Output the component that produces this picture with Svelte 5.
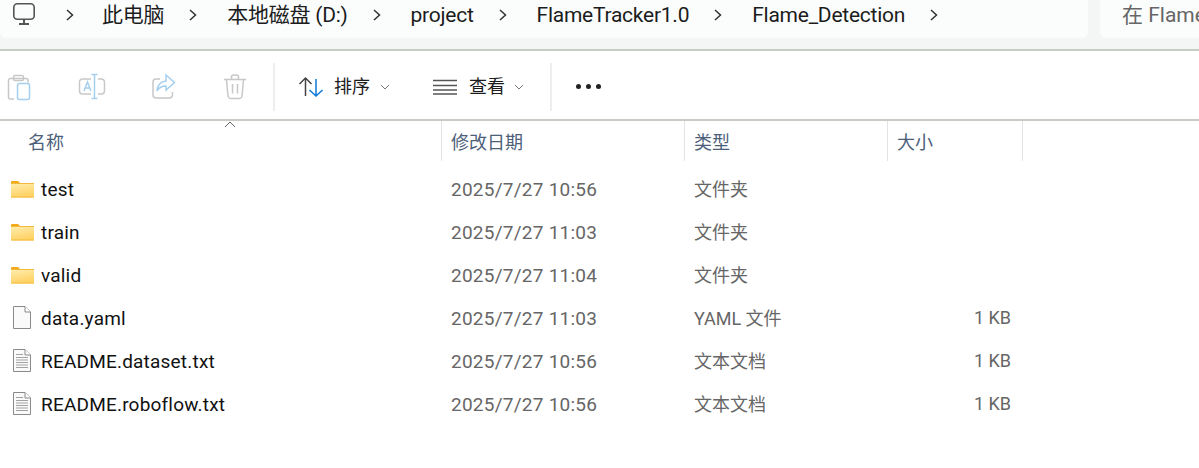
<script lang="ts">
	const crumbs = ['此电脑', '本地磁盘 (D:)', 'project', 'FlameTracker1.0', 'Flame_Detection'];

	const columns = ['修改日期', '类型', '大小'];

	const files = [
		{ name: 'test', kind: 'folder', date: '2025/7/27 10:56', type: '文件夹', size: '' },
		{ name: 'train', kind: 'folder', date: '2025/7/27 11:03', type: '文件夹', size: '' },
		{ name: 'valid', kind: 'folder', date: '2025/7/27 11:04', type: '文件夹', size: '' },
		{ name: 'data.yaml', kind: 'blank', date: '2025/7/27 11:03', type: 'YAML 文件', size: '1 KB' },
		{ name: 'README.dataset.txt', kind: 'text', date: '2025/7/27 10:56', type: '文本文档', size: '1 KB' },
		{ name: 'README.roboflow.txt', kind: 'text', date: '2025/7/27 10:56', type: '文本文档', size: '1 KB' }
	];
</script>

<div class="page">
	<!-- Address bar -->
	<div class="top">
		<div class="address">
			<svg class="pc" width="24" height="24" viewBox="0 0 24 24" fill="none" stroke="#555" stroke-width="1.6">
				<rect x="1.800" y="1.800" width="20.400" height="15.400" rx="3.500" />
				<path d="M12 17.500v4M7 22h10" stroke-width="2" />
			</svg>
			<svg class="chev first" width="10" height="14" viewBox="0 0 10 14" fill="none" stroke="#333" stroke-width="1.5"><path d="M2 2l5.500 5-5.500 5" /></svg>
			{#each crumbs as crumb}
				<span class="crumb">{crumb}</span>
				<svg class="chev" width="10" height="14" viewBox="0 0 10 14" fill="none" stroke="#333" stroke-width="1.5"><path d="M2 2l5.500 5-5.500 5" /></svg>
			{/each}
		</div>
		<div class="search">在 Flame</div>
	</div>

	<!-- Toolbar -->
	<div class="toolbar">
		<div class="tool-group">
			<svg class="tool" width="28" height="28" viewBox="0 0 28 28" fill="none" stroke-width="1.5">
				<path d="M8 26H4.500a2 2 0 0 1-2-2V7.500a2 2 0 0 1 2-2H20a2 2 0 0 1 2 2v2" stroke="#c8c8c8" />
				<rect x="7.500" y="2.500" width="10" height="5" rx="1.500" stroke="#c8c8c8" />
				<rect x="11.500" y="10.500" width="12" height="16" rx="2" stroke="#a5cfee" />
			</svg>
			<svg class="tool" width="28" height="28" viewBox="0 0 28 28" fill="none" stroke-width="1.500">
				<path d="M13 6H4.500a3 3 0 0 0-3 3v9a3 3 0 0 0 3 3H13M20 6h3.500a3 3 0 0 1 3 3v9a3 3 0 0 1-3 3H20" stroke="#c8c8c8" />
				<path d="M16.500 2v23M13.500 1.500h6M13.500 25.500h6M6 18l3.500-9 3.500 9M7.200 15h4.600" stroke="#a5cfee" />
			</svg>
			<svg class="tool" width="28" height="28" viewBox="0 0 28 28" fill="none" stroke-width="1.500">
				<path d="M22.500 19v3a3 3 0 0 1-3 3H6a3 3 0 0 1-3-3V9a3 3 0 0 1 3-3h4" stroke="#c8c8c8" />
				<path d="M16 2l8.500 7.500L16 17v-4c-4 0-7 1.500-9 5 .5-6 4-9.500 9-10z" stroke="#a5cfee" />
			</svg>
			<svg class="tool" width="28" height="28" viewBox="0 0 28 28" fill="none" stroke="#c8c8c8" stroke-width="1.500">
				<path d="M2 6.500h22M9.500 6V4a2 2 0 0 1 2-2h3a2 2 0 0 1 2 2v2M4.500 7l1.500 16a3 3 0 0 0 3 2.500h8a3 3 0 0 0 3-2.500L21.500 7M10.500 11v9.500M15.500 11v9.500" />
			</svg>
		</div>
		<div class="sep"></div>
		<div class="action sort">
			<svg width="26" height="22" viewBox="0 0 26 22" fill="none" stroke-width="1.500">
				<path d="M7.500 20V2M1.500 8l6-6 6 6" stroke="#444" />
				<path d="M18 3v17M11.500 14l6.500 6 6.500-6" stroke="#0f7ad8" />
			</svg>
			<span>排序</span>
			<svg class="caret" width="10" height="6" viewBox="0 0 10 6" fill="none" stroke="#777"><path d="M1 1l4 4 4-4" /></svg>
		</div>
		<div class="action view">
			<svg width="24" height="16" viewBox="0 0 24 16" fill="none" stroke="#555" stroke-width="1.500">
				<path d="M0 1.500h24M0 6.500h24M0 11h24M0 15h24" />
			</svg>
			<span>查看</span>
			<svg class="caret" width="10" height="6" viewBox="0 0 10 6" fill="none" stroke="#777"><path d="M1 1l4 4 4-4" /></svg>
		</div>
		<div class="sep"></div>
		<div class="more"><i></i><i></i><i></i></div>
	</div>

	<!-- File list -->
	<div class="list">
		<div class="row head">
			<div class="col name-head">
				名称
				<svg class="sort-arrow" width="12" height="7" viewBox="0 0 12 7" fill="none" stroke="#666"><path d="M1 6l5-5 5 5" /></svg>
			</div>
			{#each columns as col}
				<div class="col divided">{col}</div>
			{/each}
			<div class="end"></div>
		</div>

		{#each files as file}
			<div class="row item">
				<div class="col name">
					{#if file.kind === 'folder'}
						<svg class="icon" width="23" height="18" viewBox="0 0 23 18">
							<defs>
								<linearGradient id="folder-fill" x1="0" y1="0" x2="0.3" y2="1">
									<stop offset="0" stop-color="#ffeeb0" />
									<stop offset="1" stop-color="#ffd265" />
								</linearGradient>
							</defs>
							<path d="M0 2a1 1 0 0 1 1-1h6l2.500 2.500H0z" fill="#f2a918" />
							<rect x="0" y="3" width="23" height="14.500" rx="1" fill="url(#folder-fill)" />
							<path d="M0 3h23v1H0zM0 16.500h23v1H0z" fill="#f3b93c" />
						</svg>
					{:else}
						<svg class="icon file" width="18" height="23" viewBox="0 0 18 23" fill="#fafafa" stroke="#8a8a8a">
							<path d="M.5.500h11.500l5.500 5.500v16.500H.5z" />
							<path d="M12 .500V6h5.500" fill="#fff" />
							{#if file.kind === 'text'}
								<path d="M3 5.500h7M3 8.500h12M3 11h12M3 13.500h12M3 16h12M3 18.500h12" stroke="#a2a2a2" />
							{/if}
						</svg>
					{/if}
					<span>{file.name}</span>
				</div>
				<div class="col meta date">{file.date}</div>
				<div class="col meta kind">{file.type}</div>
				<div class="col meta size">{file.size}</div>
			</div>
		{/each}
	</div>
</div>

<style>
	:global(body) {
		margin: 0;
		background: #fff;
	}

	.page {
		width: 1199px;
		height: 468px;
		overflow: hidden;
		font-family: Roboto, 'Noto Sans CJK SC', sans-serif;
		color: #1c1c1c;
	}

	/* Address bar */
	.top {
		display: flex;
		gap: 12px;
		height: 51px;
		box-sizing: border-box;
		background: #f3f6f5;
		border-bottom: 2px solid #c7cdc4;
	}

	.address {
		display: flex;
		align-items: center;
		width: 1088px;
		height: 38px;
		box-sizing: border-box;
		padding: 0 0 8px 12px;
		background: #fbfcfc;
		border-radius: 0 0 6px 6px;
	}

	.pc {
		flex: none;
		margin-top: -3px;
	}

	.chev {
		flex: none;
		margin: 0 29px 0 24px;
	}

	.chev.first {
		margin: 0 27px 0 29px;
	}

	.crumb {
		font-size: 21px;
		line-height: 30px;
		letter-spacing: -0.25px;
		white-space: nowrap;
	}

	.search {
		flex: 1;
		height: 38px;
		padding-left: 22px;
		background: #fbfcfc;
		border-radius: 0 0 0 6px;
		font-size: 21px;
		line-height: 30px;
		color: #666;
		white-space: nowrap;
		overflow: hidden;
	}

	/* Toolbar */
	.toolbar {
		display: flex;
		align-items: center;
		height: 70px;
		box-sizing: border-box;
		padding-top: 3px;
		border-bottom: 2px solid #c7cdc4;
	}

	.tool-group {
		display: flex;
		gap: 44px;
		width: 273px;
		padding-left: 6px;
		box-sizing: border-box;
	}

	.sep {
		width: 2px;
		height: 48px;
		background: #eeeeee;
		flex: none;
	}

	.action {
		display: flex;
		align-items: center;
		font-size: 18px;
		line-height: 24px;
	}

	.sort {
		width: 134px;
		padding-left: 23px;
		box-sizing: border-box;
	}

	.sort span {
		margin-left: 10px;
		margin-right: 10px;
	}

	.view {
		width: 141px;
		padding-left: 24px;
		box-sizing: border-box;
	}

	.view span {
		margin-left: 12px;
		margin-right: 9px;
	}

	.more {
		display: flex;
		gap: 5px;
		margin-left: 24px;
	}

	.more i {
		width: 5px;
		height: 5px;
		border-radius: 50%;
		background: #222;
	}

	/* File list */
	.row {
		display: grid;
		grid-template-columns: 441px 243px 203px 135px 1fr;
	}

	.head {
		height: 40px;
		font-size: 18px;
		color: #4c607a;
		margin-bottom: 6px;
	}

	.head .col {
		line-height: 43px;
		height: 40px;
	}

	.name-head {
		position: relative;
		padding-left: 28px;
	}

	.sort-arrow {
		position: absolute;
		left: 224px;
		top: 0;
	}

	.divided {
		border-left: 1px solid #e3e3e3;
		padding-left: 9px;
	}

	.end {
		border-left: 1px solid #e3e3e3;
	}

	.item {
		height: 43px;
		align-items: center;
		font-size: 18px;
	}

	.name {
		display: flex;
		align-items: center;
		padding-left: 11px;
		font-size: 19px;
		letter-spacing: 0.2px;
		color: #111;
	}

	.name span {
		margin-top: 2px;
	}

	.icon {
		flex: none;
		margin-right: 7px;
	}

	.icon.file {
		margin-left: 2px;
		margin-right: 10px;
	}

	.meta {
		padding-left: 10px;
		color: #666;
	}

	.date {
		padding-top: 2px;
		font-size: 19px;
		letter-spacing: 0.25px;
	}

	.kind {
		padding-bottom: 2px;
	}

	.size {
		text-align: right;
		padding-right: 11px;
	}
</style>
